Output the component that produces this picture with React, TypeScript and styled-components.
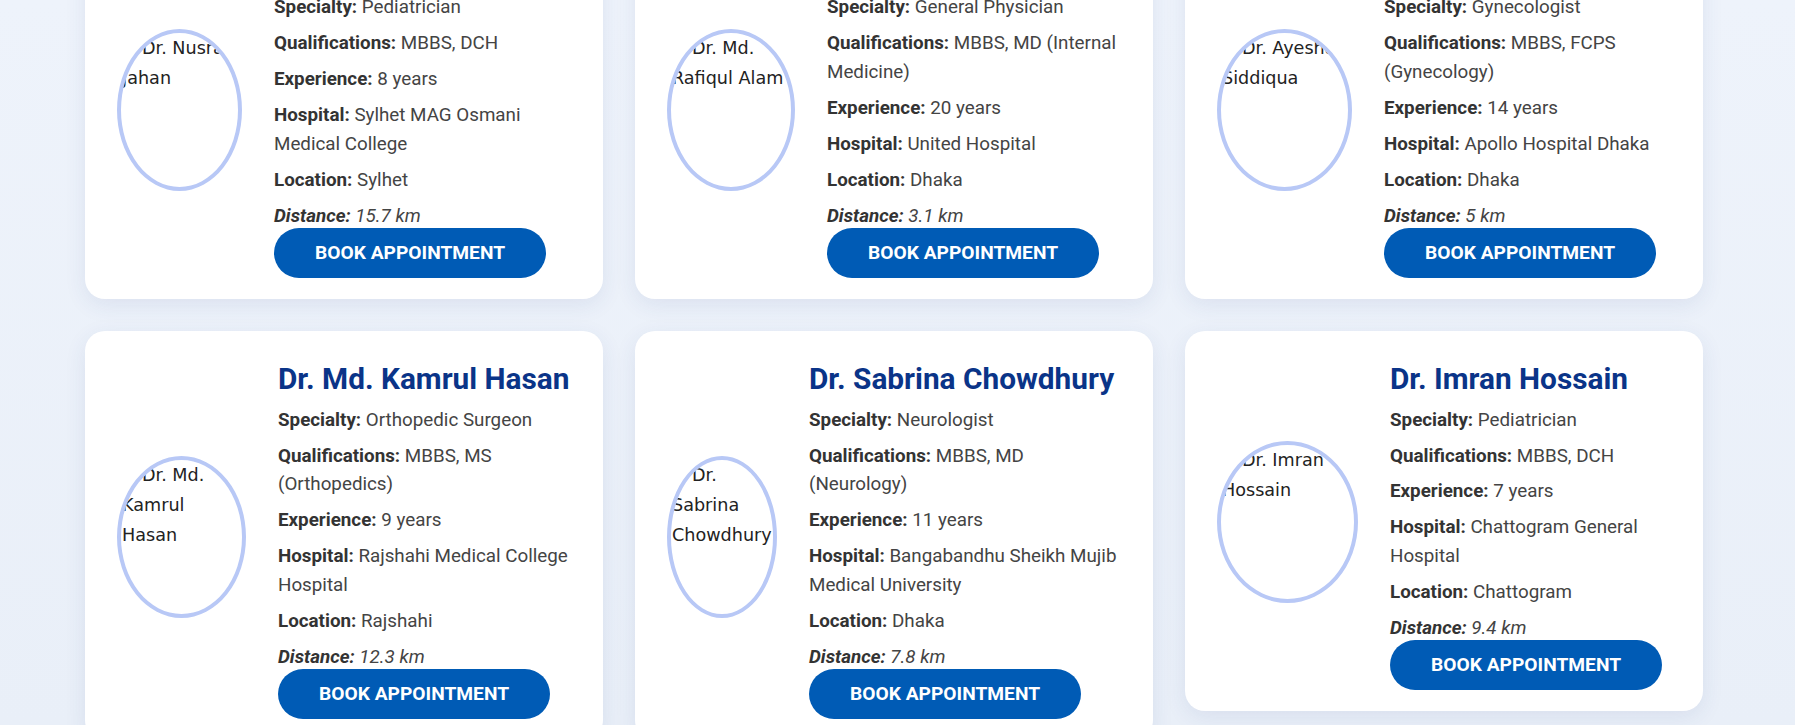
import React from "react";
import styled, { createGlobalStyle } from "styled-components";

const GlobalStyle = createGlobalStyle`
  html, body {
    margin: 0;
    padding: 0;
  }
  body {
    background: linear-gradient(180deg, #eef3fb 0%, #e9eff8 100%);
    font-family: Roboto, "Liberation Sans", Arial, sans-serif;
    min-height: 725px;
    overflow: hidden;
  }
`;

const Page = styled.div`
  padding: 0 92px 0 85px;
  height: 725px;
  overflow: hidden;
`;

const Grid = styled.div`
  display: grid;
  grid-template-columns: repeat(3, 1fr);
  gap: 32px;
  align-items: start;
  margin-top: -82px;
`;

const Card = styled.article`
  display: flex;
  align-items: center;
  gap: 32px;
  padding: 24px 32px 21px;
  background: #ffffff;
  border-radius: 20px;
  box-shadow: 0 6px 22px rgba(40, 70, 130, 0.09);
`;

const Photo = styled.div<{ $w: number }>`
  flex: 0 0 auto;
  box-sizing: border-box;
  width: ${(p) => p.$w}px;
  height: 162px;
  border: 4px solid #b8c8f6;
  border-radius: 50%;
  overflow: hidden;
  padding: 0 1px;
  font-family: "DejaVu Sans", "Noto Sans", sans-serif;
  font-size: 17.6px;
  line-height: 30px;
  color: #222;
`;

const BrokenIcon = styled.svg`
  width: 16px;
  height: 16px;
  vertical-align: -2px;
  margin-right: 4px;
`;

const Info = styled.div`
  flex: 1 1 auto;
  min-width: 0;
`;

const Name = styled.h2`
  margin: 6px 0 9px;
  font-size: 29.8px;
  line-height: 36px;
  font-weight: 700;
  color: #0a3488;
`;

const Row = styled.p<{ $italic?: boolean }>`
  margin: 0 0 ${(p) => (p.$italic ? 0 : 7.2)}px;
  font-size: 18.8px;
  line-height: 28.8px;
  color: #444;
  font-style: ${(p) => (p.$italic ? "italic" : "normal")};

  strong {
    color: #333;
    font-weight: 700;
  }
`;

const BookButton = styled.button`
  display: inline-block;
  margin-top: -3px;
  border: none;
  border-radius: 30px;
  background: #005bb5;
  color: #ffffff;
  font-family: Roboto, "Liberation Sans", Arial, sans-serif;
  font-weight: 700;
  font-size: 19.2px;
  line-height: 26px;
  padding: 12px 41px;
  text-transform: uppercase;
  cursor: pointer;
`;

type Doctor = {
  name: string;
  specialty: string;
  qualifications: string;
  experience: string;
  hospital: string;
  location: string;
  distance: string;
  photoWidth: number;
};

const doctors: Doctor[] = [
  {
    name: "Dr. Nusrat Jahan",
    specialty: "Pediatrician",
    qualifications: "MBBS, DCH",
    experience: "8 years",
    hospital: "Sylhet MAG Osmani Medical College",
    location: "Sylhet",
    distance: "15.7 km",
    photoWidth: 125,
  },
  {
    name: "Dr. Md. Rafiqul Alam",
    specialty: "General Physician",
    qualifications: "MBBS, MD (Internal Medicine)",
    experience: "20 years",
    hospital: "United Hospital",
    location: "Dhaka",
    distance: "3.1 km",
    photoWidth: 128,
  },
  {
    name: "Dr. Ayesha Siddiqua",
    specialty: "Gynecologist",
    qualifications: "MBBS, FCPS (Gynecology)",
    experience: "14 years",
    hospital: "Apollo Hospital Dhaka",
    location: "Dhaka",
    distance: "5 km",
    photoWidth: 135,
  },
  {
    name: "Dr. Md. Kamrul Hasan",
    specialty: "Orthopedic Surgeon",
    qualifications: "MBBS, MS (Orthopedics)",
    experience: "9 years",
    hospital: "Rajshahi Medical College Hospital",
    location: "Rajshahi",
    distance: "12.3 km",
    photoWidth: 129,
  },
  {
    name: "Dr. Sabrina Chowdhury",
    specialty: "Neurologist",
    qualifications: "MBBS, MD (Neurology)",
    experience: "11 years",
    hospital: "Bangabandhu Sheikh Mujib Medical University",
    location: "Dhaka",
    distance: "7.8 km",
    photoWidth: 110,
  },
  {
    name: "Dr. Imran Hossain",
    specialty: "Pediatrician",
    qualifications: "MBBS, DCH",
    experience: "7 years",
    hospital: "Chattogram General Hospital",
    location: "Chattogram",
    distance: "9.4 km",
    photoWidth: 141,
  },
];

const Broken = () => (
  <BrokenIcon viewBox="0 0 16 16" aria-hidden="true">
    <path d="M2.5 1.5h8l3 3v5l-2 1.5-2-1.5-2 1.5-2-1.5-3 1.5z" fill="#fff" stroke="#8a8a8a" />
    <path d="M2.5 12.5l3-1.5 2 1.5 2-1.5 2 1.5 2-1.5v3.5h-11z" fill="#fff" stroke="#8a8a8a" />
    <rect x="4" y="4" width="5" height="3" fill="#6fa8dc" />
    <path d="M4 8l2-1.5 2 1.5" fill="none" stroke="#5cb85c" />
  </BrokenIcon>
);

const DoctorCard = ({ d }: { d: Doctor }) => (
  <Card>
    <Photo $w={d.photoWidth} role="img" aria-label={d.name}>
      <Broken />
      {d.name}
    </Photo>
    <Info>
      <Name>{d.name}</Name>
      <Row>
        <strong>Specialty:</strong> {d.specialty}
      </Row>
      <Row>
        <strong>Qualifications:</strong> {d.qualifications}
      </Row>
      <Row>
        <strong>Experience:</strong> {d.experience}
      </Row>
      <Row>
        <strong>Hospital:</strong> {d.hospital}
      </Row>
      <Row>
        <strong>Location:</strong> {d.location}
      </Row>
      <Row $italic>
        <strong>Distance:</strong> {d.distance}
      </Row>
      <BookButton>Book Appointment</BookButton>
    </Info>
  </Card>
);

export default function App() {
  return (
    <>
      <GlobalStyle />
      <Page>
        <Grid>
          {doctors.map((d) => (
            <DoctorCard key={d.name} d={d} />
          ))}
        </Grid>
      </Page>
    </>
  );
}
